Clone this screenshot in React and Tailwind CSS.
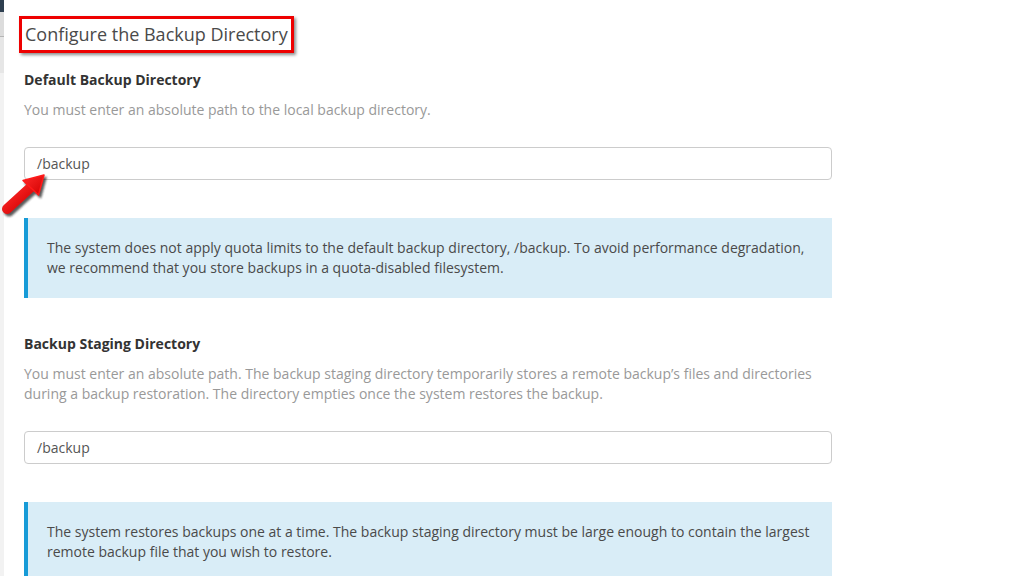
import React from 'react'

const INFO_1 = (
  <>
    The system does not apply quota limits to the default backup directory, /backup. To avoid performance degradation,
    <br />
    we recommend that you store backups in a quota-disabled filesystem.
  </>
)

const INFO_2 = (
  <>
    The system restores backups one at a time. The backup staging directory must be large enough to contain the largest
    <br />
    remote backup file that you wish to restore.
  </>
)

function Arrow() {
  // red callout arrow pointing at the first input
  return (
    <svg className="absolute left-0 top-[165px]" width="54" height="54" viewBox="0 0 54 54">
      <defs>
        <linearGradient id="arrowRed" x1="0" y1="0" x2="1" y2="1">
          <stop offset="0" stopColor="#ff2a2a" />
          <stop offset="1" stopColor="#d10000" />
        </linearGradient>
        <filter id="arrowShadow" x="-20%" y="-20%" width="140%" height="140%">
          <feGaussianBlur stdDeviation="1.2" />
        </filter>
      </defs>
      <g transform="translate(2 2.5)" fill="#222" stroke="#222" opacity="0.75" filter="url(#arrowShadow)">
        <line x1="7" y1="44" x2="30" y2="23" strokeWidth="10" strokeLinecap="round" />
        <polygon points="44,10 38.5,30 23,15.5" strokeWidth="1.5" strokeLinejoin="round" />
      </g>
      <line x1="7" y1="44" x2="30" y2="23" stroke="url(#arrowRed)" strokeWidth="10" strokeLinecap="round" />
      <polygon points="44,10 38.5,30 23,15.5" fill="url(#arrowRed)" stroke="#ff1a1a" strokeWidth="1.5" strokeLinejoin="round" />
    </svg>
  )
}

function Field({ label, description, value }) {
  return (
    <div>
      <div className="text-[14px] leading-[20px] font-bold text-[#333]">{label}</div>
      <p className="mt-[10px] text-[14px] leading-[20px] text-[#999]">{description}</p>
      <div className="mt-[27px] w-[808px] h-[33px] border border-[#ccc] rounded-[4px] bg-white pl-[12px] flex items-center text-[14px] text-[#555]">
        {value}
      </div>
    </div>
  )
}

function Notice({ children }) {
  return (
    <div className="w-[808px] bg-[#d9edf7] border-l-[4px] border-[#179bd7] pl-[19px] pr-[12px] pt-[20px] pb-[20px] text-[14px] leading-[20px] text-[#4a4a4a]">
      {children}
    </div>
  )
}

export default function App() {
  return (
    <div
      className="relative flex w-[1024px] h-[576px] overflow-hidden bg-white"
      style={{ fontFamily: '"Open Sans", "Noto Sans", sans-serif' }}
    >
      {/* sidebar edge */}
      <div className="w-[4px] flex flex-col bg-[#f2f2f2]">
        <div className="h-[12px] bg-[#2e3f50]" />
        <div className="h-[25px] bg-[#dcdcdc] border-b border-[#b5b5b5]" />
        <div className="h-[36px] bg-[#e6e6e6]" />
      </div>

      <div className="flex-1 pl-[20px]">
        <div className="mt-[16px] -ml-[5px] inline-block border-[3px] border-[#ee0000] px-[3px] shadow-[2px_2px_3px_rgba(0,0,0,0.45)]">
          <h1 className="text-[18px] leading-[31px] text-[#4a4a4a]">Configure the Backup Directory</h1>
        </div>

        <div className="mt-[17px]">
          <Field
            label="Default Backup Directory"
            description="You must enter an absolute path to the local backup directory."
            value="/backup"
          />
        </div>

        <div className="mt-[38px]">
          <Notice>{INFO_1}</Notice>
        </div>

        <div className="mt-[36px]">
          <Field
            label="Backup Staging Directory"
            description={
              <>
                You must enter an absolute path. The backup staging directory temporarily stores a remote backup’s files and directories
                <br />
                during a backup restoration. The directory empties once the system restores the backup.
              </>
            }
            value="/backup"
          />
        </div>

        <div className="mt-[38px]">
          <Notice>{INFO_2}</Notice>
        </div>
      </div>

      <Arrow />
    </div>
  )
}
